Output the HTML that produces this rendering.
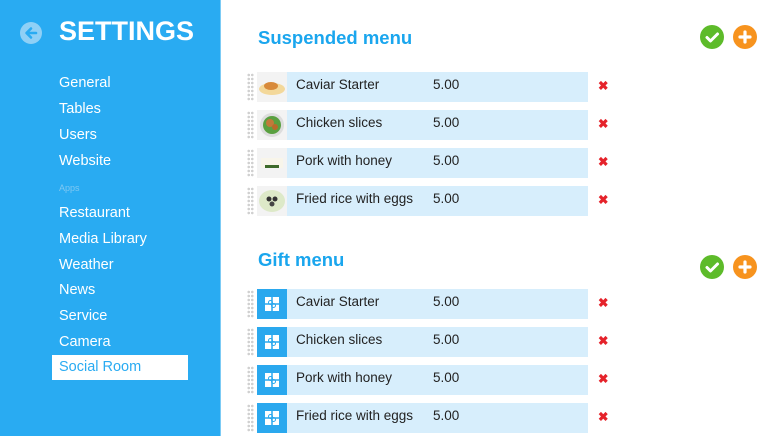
<!DOCTYPE html>
<html><head><meta charset="utf-8"><style>
*{margin:0;padding:0;box-sizing:border-box}
body{width:776px;height:436px;overflow:hidden;background:#fff;font-family:"Liberation Sans",sans-serif;position:relative}
.side{position:absolute;left:0;top:0;width:221px;height:436px;background:#29abf2;border-right:1px solid #7ccbf5}
.back{position:absolute;left:20px;top:22px;width:22px;height:22px;border-radius:50%;background:#8fd0f6}
.title{position:absolute;left:59px;top:16px;color:#fff;font-weight:bold;font-size:27px;letter-spacing:0}
.nav{position:absolute;left:59px;color:#fff;font-size:14.5px}
.apps{position:absolute;left:59px;top:183px;color:#7fc8f2;font-size:9px}
.sel{position:absolute;left:52px;top:355px;width:136px;height:25px;background:#fff;color:#29abf2;font-size:14.5px;padding:4px 0 0 7px}
h2{position:absolute;left:258px;color:#1aa6ee;font-size:18.5px;font-weight:900;letter-spacing:0}
.row{position:absolute;left:257px;width:331px;height:30px;background:#d7eefc}
.row .img{position:absolute;left:0;top:0;width:30px;height:30px;background:#f3f3f3}
.row .gift{position:absolute;left:0;top:0;width:30px;height:30px;background:#2aa8ee}
.row .n{position:absolute;left:39px;top:5px;font-size:13.5px;color:#222}
.row .p{position:absolute;left:176px;top:5px;font-size:13.5px;color:#222}
.dots{position:absolute;left:-10px;top:1px;width:7px;height:28px;background-image:radial-gradient(circle,#d0d0d0 1.2px,transparent 1.4px);background-size:3.5px 4px}
.x{position:absolute;left:598px;color:#e5232b;font-size:12.5px;font-weight:bold}
.btn{position:absolute;width:24px;height:24px;border-radius:50%}
</style></head><body>
<div class="side">
<div class="back"><svg width="22" height="22" viewBox="0 0 22 22"><path d="M16 11H7M11 6.5L6.5 11 11 15.5" stroke="#29abf2" stroke-width="2.6" fill="none" stroke-linecap="round" stroke-linejoin="round"/></svg></div>
<div class="title">SETTINGS</div>
<div class="nav" style="top:75px">General</div>
<div class="nav" style="top:101px">Tables</div>
<div class="nav" style="top:127px">Users</div>
<div class="nav" style="top:153px">Website</div>
<div class="apps">Apps</div>
<div class="nav" style="top:205px">Restaurant</div>
<div class="nav" style="top:231px">Media Library</div>
<div class="nav" style="top:257px">Weather</div>
<div class="nav" style="top:282px">News</div>
<div class="nav" style="top:308px">Service</div>
<div class="nav" style="top:334px">Camera</div>
<div class="sel">Social Room</div>
</div>

<h2 style="top:27px">Suspended menu</h2>
<h2 style="top:249px">Gift menu</h2>

<div class="btn" style="left:700px;top:25px;background:#5dbb2a"><svg width="24" height="24"><path d="M7 12.5l3.5 3.5 7-7" stroke="#fff" stroke-width="3" fill="none" stroke-linecap="round" stroke-linejoin="round"/></svg></div>
<div class="btn" style="left:733px;top:25px;background:#f7931e"><svg width="24" height="24"><path d="M12 7v10M7 12h10" stroke="#fff" stroke-width="3.2" stroke-linecap="round"/></svg></div>
<div class="btn" style="left:700px;top:255px;background:#5dbb2a"><svg width="24" height="24"><path d="M7 12.5l3.5 3.5 7-7" stroke="#fff" stroke-width="3" fill="none" stroke-linecap="round" stroke-linejoin="round"/></svg></div>
<div class="btn" style="left:733px;top:255px;background:#f7931e"><svg width="24" height="24"><path d="M12 7v10M7 12h10" stroke="#fff" stroke-width="3.2" stroke-linecap="round"/></svg></div>

<div class="row" style="top:72px"><div class="dots"></div><div class="img"><svg width="30" height="30"><ellipse cx="15" cy="17" rx="13" ry="6" fill="#f3d89a"/><ellipse cx="14" cy="14" rx="7" ry="4" fill="#d88a3a"/></svg></div><div class="n">Caviar Starter</div><div class="p">5.00</div></div>
<div class="row" style="top:110px"><div class="dots"></div><div class="img"><svg width="30" height="30"><circle cx="15" cy="15" r="12" fill="#ddd"/><circle cx="15" cy="15" r="9" fill="#5aa040"/><circle cx="13" cy="13" r="4" fill="#c07a3a"/><circle cx="18" cy="17" r="3" fill="#b86a2a"/></svg></div><div class="n">Chicken slices</div><div class="p">5.00</div></div>
<div class="row" style="top:148px"><div class="dots"></div><div class="img"><svg width="30" height="30"><rect x="4" y="10" width="22" height="10" fill="#f8f5ea"/><rect x="8" y="17" width="14" height="3" fill="#3e6a2a"/></svg></div><div class="n">Pork with honey</div><div class="p">5.00</div></div>
<div class="row" style="top:186px"><div class="dots"></div><div class="img"><svg width="30" height="30"><ellipse cx="15" cy="15" rx="13" ry="11" fill="#dde9c8"/><circle cx="12" cy="13" r="2.5" fill="#333"/><circle cx="18" cy="13" r="2.5" fill="#333"/><circle cx="15" cy="18" r="2.5" fill="#444"/></svg></div><div class="n">Fried rice with eggs</div><div class="p">5.00</div></div>

<div class="row" style="top:289px"><div class="dots"></div><div class="gift"><svg width="30" height="30"><rect x="8" y="8" width="14" height="14" fill="#fff"/><path d="M15 8v14M8 15h14" stroke="#2aa8ee" stroke-width="1.5"/><circle cx="13.5" cy="13.5" r="2" fill="none" stroke="#2aa8ee"/><circle cx="16.5" cy="16.5" r="2" fill="none" stroke="#2aa8ee"/></svg></div><div class="n">Caviar Starter</div><div class="p">5.00</div></div>
<div class="row" style="top:327px"><div class="dots"></div><div class="gift"><svg width="30" height="30"><rect x="8" y="8" width="14" height="14" fill="#fff"/><path d="M15 8v14M8 15h14" stroke="#2aa8ee" stroke-width="1.5"/><circle cx="13.5" cy="13.5" r="2" fill="none" stroke="#2aa8ee"/><circle cx="16.5" cy="16.5" r="2" fill="none" stroke="#2aa8ee"/></svg></div><div class="n">Chicken slices</div><div class="p">5.00</div></div>
<div class="row" style="top:365px"><div class="dots"></div><div class="gift"><svg width="30" height="30"><rect x="8" y="8" width="14" height="14" fill="#fff"/><path d="M15 8v14M8 15h14" stroke="#2aa8ee" stroke-width="1.5"/><circle cx="13.5" cy="13.5" r="2" fill="none" stroke="#2aa8ee"/><circle cx="16.5" cy="16.5" r="2" fill="none" stroke="#2aa8ee"/></svg></div><div class="n">Pork with honey</div><div class="p">5.00</div></div>
<div class="row" style="top:403px"><div class="dots"></div><div class="gift"><svg width="30" height="30"><rect x="8" y="8" width="14" height="14" fill="#fff"/><path d="M15 8v14M8 15h14" stroke="#2aa8ee" stroke-width="1.5"/><circle cx="13.5" cy="13.5" r="2" fill="none" stroke="#2aa8ee"/><circle cx="16.5" cy="16.5" r="2" fill="none" stroke="#2aa8ee"/></svg></div><div class="n">Fried rice with eggs</div><div class="p">5.00</div></div>

<div class="x" style="top:78px">✖</div>
<div class="x" style="top:116px">✖</div>
<div class="x" style="top:154px">✖</div>
<div class="x" style="top:192px">✖</div>
<div class="x" style="top:295px">✖</div>
<div class="x" style="top:333px">✖</div>
<div class="x" style="top:371px">✖</div>
<div class="x" style="top:409px">✖</div>
</body></html>
